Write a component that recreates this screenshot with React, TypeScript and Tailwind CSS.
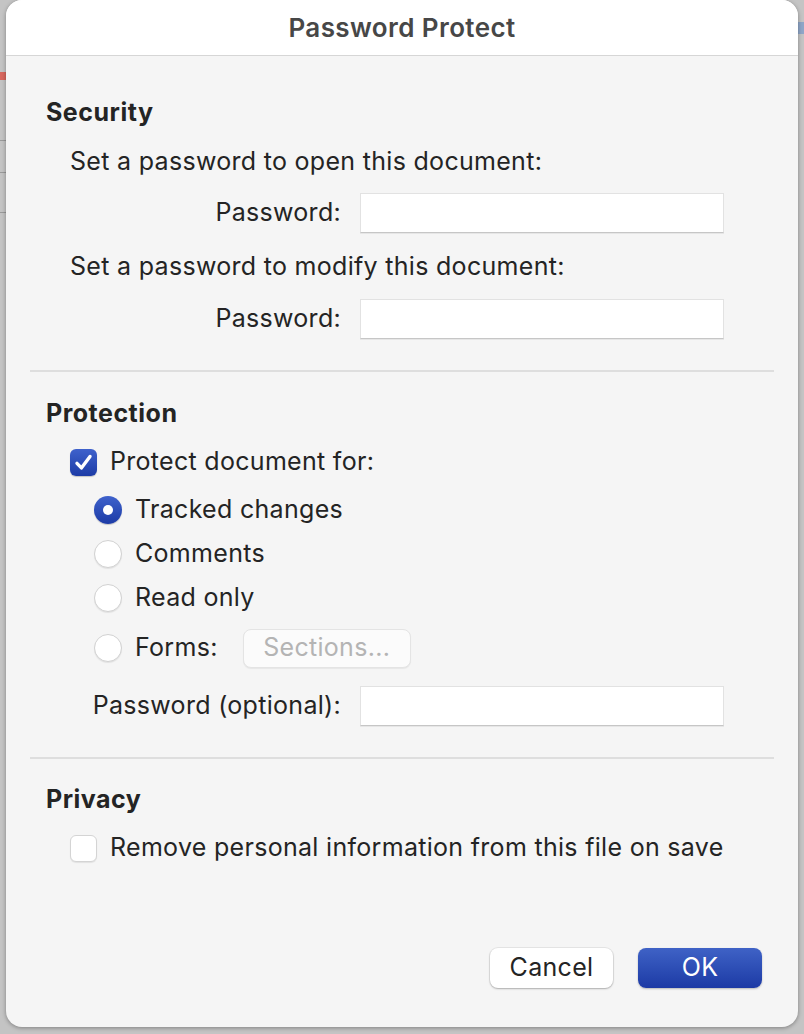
import React from "react"

const font = { fontFamily: "Inter, 'Noto Sans', sans-serif" }

function Field() {
  return (
    <div className="h-[40px] w-[364px] bg-white border border-[#e2e2e2] border-b-[#c6c6c6] shadow-[0_1px_0_rgba(0,0,0,0.06)]" />
  )
}

function PwRow({ label }: { label: string }) {
  return (
    <div className="flex items-center h-[40px]">
      <div className="w-[295px] text-right">{label}</div>
      <div className="ml-[19px]"><Field /></div>
    </div>
  )
}

function Check({ on }: { on?: boolean }) {
  if (on) {
    return (
      <div className="w-[27px] h-[27px] rounded-[6px] bg-gradient-to-b from-[#3f62cc] to-[#1d3ba6] flex items-center justify-center shadow-[0_1px_1px_rgba(0,0,0,0.2)]">
        <svg width="21" height="21" viewBox="0 0 20 20" fill="none">
          <path d="M3.8 10.8 L8 15.2 L16.2 4.2" stroke="white" strokeWidth="3.2" strokeLinecap="round" strokeLinejoin="round" />
        </svg>
      </div>
    )
  }
  return <div className="w-[27px] h-[27px] rounded-[6px] bg-white border border-[#d4d4d4] shadow-[0_1px_1px_rgba(0,0,0,0.08)]" />
}

function Radio({ on }: { on?: boolean }) {
  if (on) {
    return (
      <div className="w-[28px] h-[28px] rounded-full bg-gradient-to-b from-[#3f62cc] to-[#1d3ba6] flex items-center justify-center shadow-[0_1px_1px_rgba(0,0,0,0.2)]">
        <div className="w-[10px] h-[10px] rounded-full bg-white" />
      </div>
    )
  }
  return <div className="w-[28px] h-[28px] rounded-full bg-white border border-[#d2d2d2] shadow-[0_1px_1px_rgba(0,0,0,0.08)]" />
}

function RadioRow({ on, label, className, children }: { on?: boolean; label: string; className?: string; children?: React.ReactNode }) {
  return (
    <div className={"flex items-center pl-[48px] " + (className ?? "")}>
      <Radio on={on} />
      <span className="ml-[13px]">{label}</span>
      {children}
    </div>
  )
}

function Divider({ className }: { className: string }) {
  return <div className={"h-[2px] bg-[#dedede] " + className} />
}

export default function App() {
  return (
    <div className="w-[804px] h-[1034px] bg-[#c4c4c4] relative overflow-hidden" style={font}>
      {/* bits of the window behind */}
      <div className="absolute left-0 top-[72px] w-[6px] h-[8px] bg-[#d8675e]" />
      <div className="absolute left-0 top-[140px] w-[6px] h-px bg-[#9a9a9a]" />
      <div className="absolute left-0 top-[172px] w-[6px] h-px bg-[#9a9a9a]" />
      <div className="absolute left-0 top-[212px] w-[6px] h-px bg-[#9a9a9a]" />
      <div className="absolute right-0 top-[22px] w-[6px] h-[12px] bg-[#8fa6c8]" />

      <div className="absolute left-[6px] top-0 w-[792px] h-[1027px] rounded-[16px] overflow-hidden bg-[#f5f5f5] shadow-[0_1px_4px_rgba(0,0,0,0.35)] text-[25px] text-[#242424] tracking-[0.3px]">
        <div className="h-[56px] bg-white border-b border-[#d6d6d6] flex items-center justify-center">
          <span className="font-semibold text-[#474747] text-[26px] tracking-[0.4px] -mt-[1px]">Password Protect</span>
        </div>

        <div className="px-[24px]">
          <div className="pl-[16px]">
            <div className="h-[30px] mt-[42px] flex items-center font-bold tracking-[0.5px]">Security</div>
            <div className="h-[30px] mt-[19px] flex items-center pl-[24px]">Set a password to open this document:</div>
            <div className="mt-[16px]"><PwRow label="Password:" /></div>
            <div className="h-[30px] mt-[19px] flex items-center pl-[24px]">Set a password to modify this document:</div>
            <div className="mt-[17px]"><PwRow label="Password:" /></div>
          </div>

          <Divider className="mt-[31px]" />

          <div className="pl-[16px]">
            <div className="h-[30px] mt-[27px] flex items-center font-bold tracking-[0.5px]">Protection</div>
            <div className="h-[30px] mt-[18px] flex items-center pl-[24px]">
              <Check on />
              <span className="ml-[13px]">Protect document for:</span>
            </div>
            <RadioRow on label="Tracked changes" className="h-[30px] mt-[18px]" />
            <RadioRow label="Comments" className="h-[30px] mt-[14px]" />
            <RadioRow label="Read only" className="h-[30px] mt-[14px]" />
            <RadioRow label="Forms:" className="h-[40px] mt-[15px]">
              <div className="ml-[25px] w-[168px] h-[39px] rounded-[8px] bg-[#fbfbfb] border border-[#e4e4e4] shadow-[0_1px_1px_rgba(0,0,0,0.06)] flex items-center justify-center text-[#b4b4b4]">
                Sections...
              </div>
            </RadioRow>
            <div className="mt-[18px]"><PwRow label="Password (optional):" /></div>
          </div>

          <Divider className="mt-[31px]" />

          <div className="pl-[16px]">
            <div className="h-[30px] mt-[26px] flex items-center font-bold tracking-[0.5px]">Privacy</div>
            <div className="h-[30px] mt-[18px] flex items-center pl-[24px]">
              <Check />
              <span className="ml-[13px]">Remove personal information from this file on save</span>
            </div>
          </div>

          <div className="flex justify-end gap-[25px] mt-[85px] pr-[12px]">
            <button className="w-[123px] h-[40px] rounded-[8px] bg-white shadow-[0_0_0_1px_rgba(0,0,0,0.06),0_1px_2px_rgba(0,0,0,0.25)] text-[#242424]">
              Cancel
            </button>
            <button className="w-[124px] h-[40px] rounded-[8px] bg-gradient-to-b from-[#3f62c6] to-[#1d3aa5] shadow-[0_1px_2px_rgba(0,0,0,0.25)] text-white">
              OK
            </button>
          </div>
        </div>
      </div>
    </div>
  )
}
